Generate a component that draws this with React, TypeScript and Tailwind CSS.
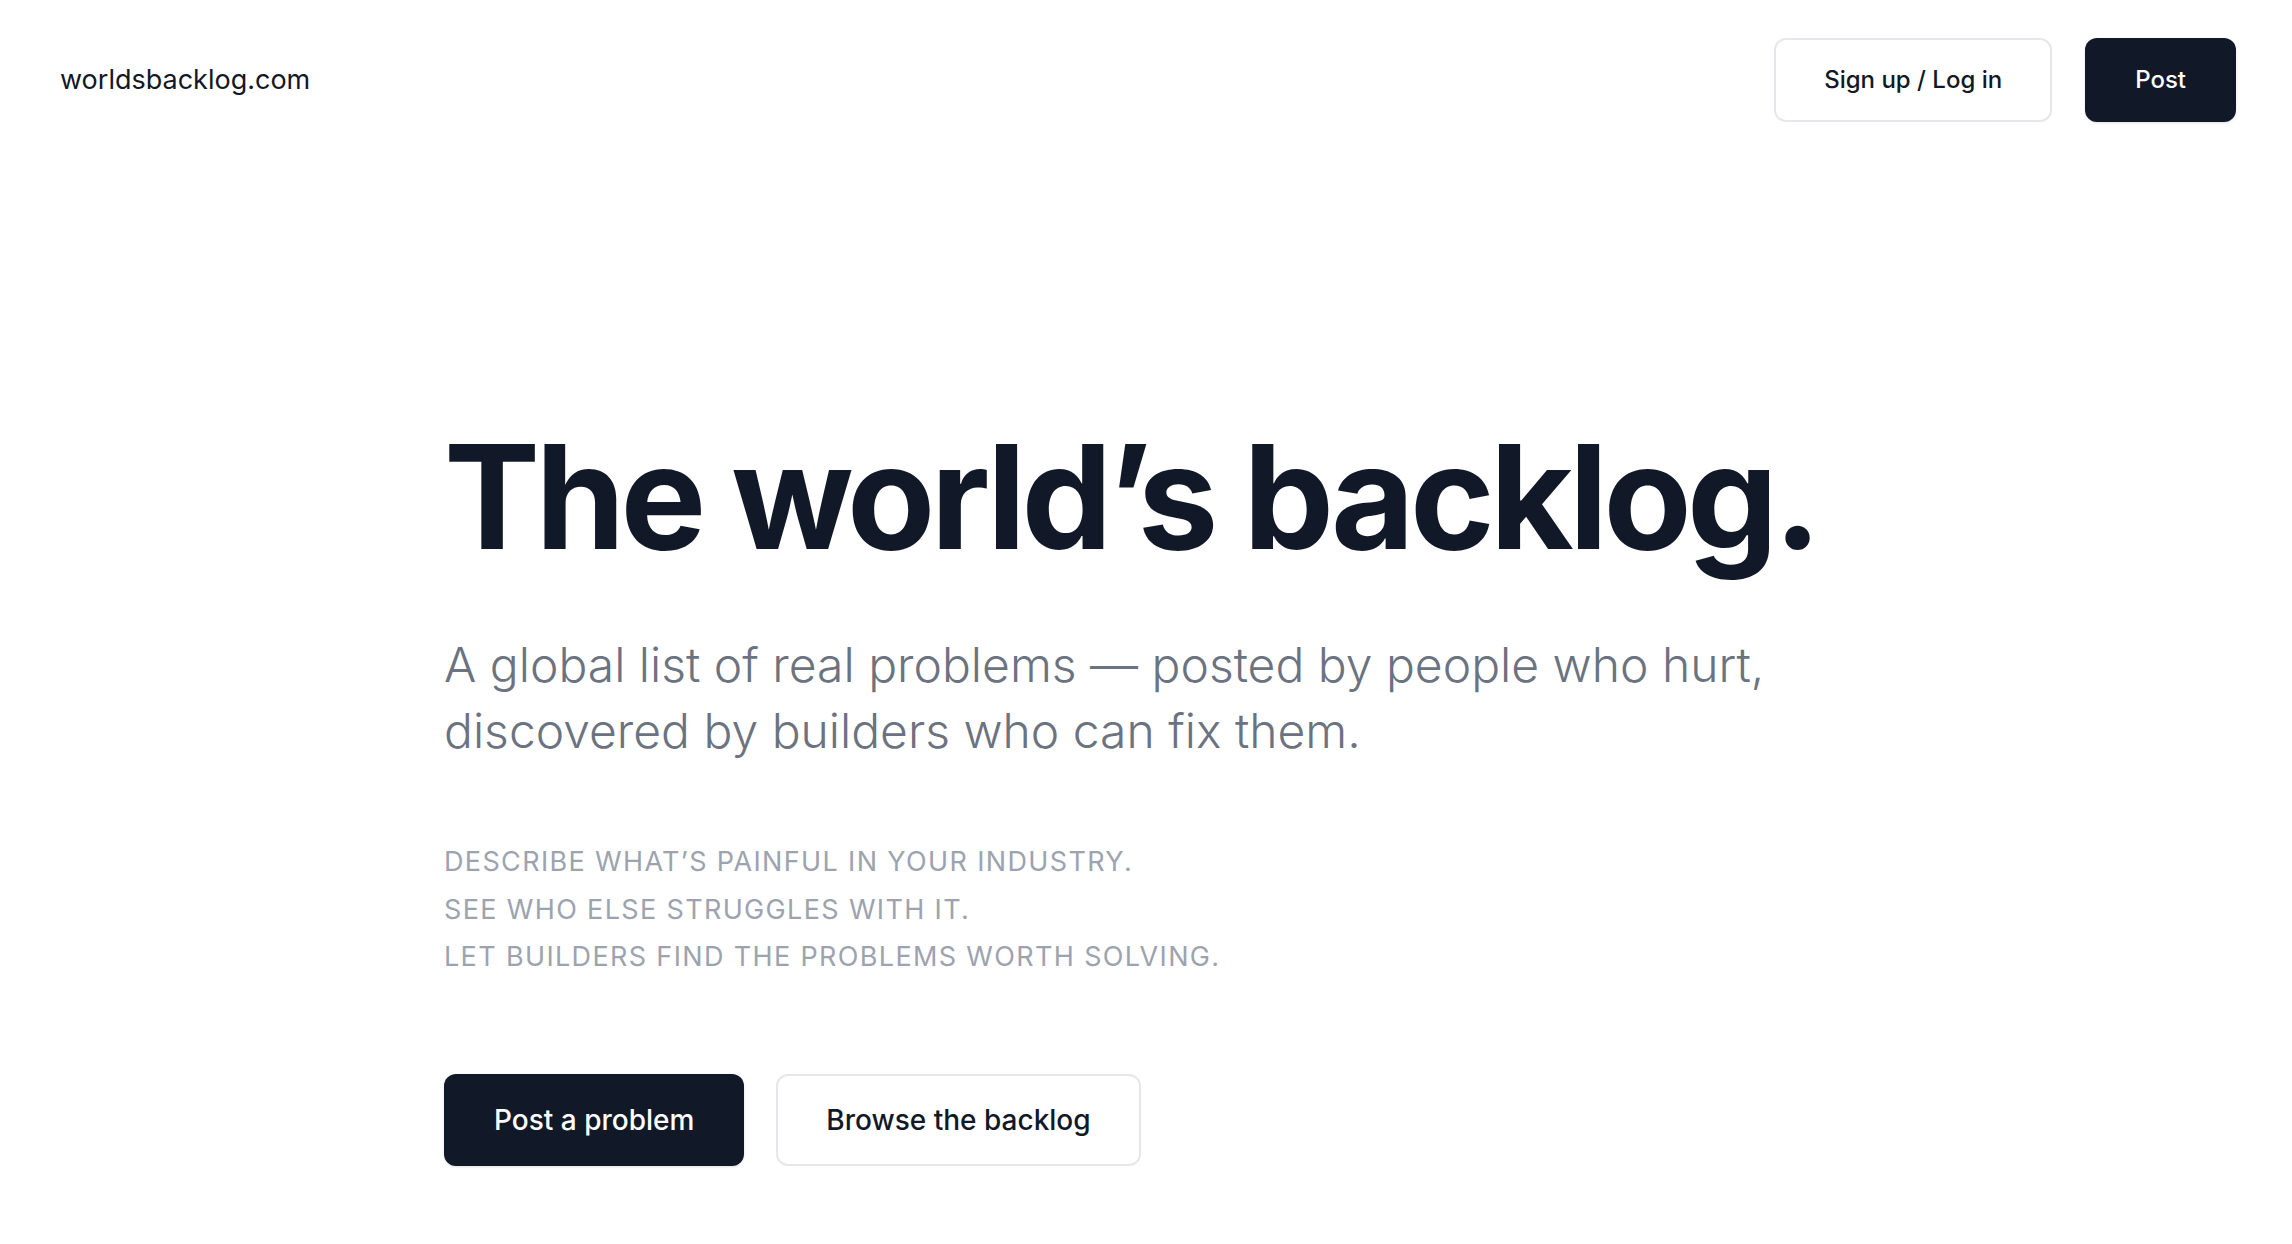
import React from 'react';

const taglines = [
  'Describe what’s painful in your industry.',
  'See who else struggles with it.',
  'Let builders find the problems worth solving.',
];

const App: React.FC = () => {
  return (
    <div className="min-h-screen bg-white font-['Inter','Noto_Sans',sans-serif] text-[#111827]">
      {/* Top bar */}
      <header className="flex items-center justify-between pl-[60px] pr-[56px] pt-[38px]">
        <a href="#" className="text-[27px] font-normal leading-[42px] text-[#111827]">
          worldsbacklog.com
        </a>
        <div className="flex items-center gap-[33px]">
          <button className="h-[84px] rounded-[12px] border-2 border-[#e5e7eb] bg-white px-[48px] text-[24px] font-medium text-[#111827]">
            Sign up / Log in
          </button>
          <button className="h-[84px] rounded-[12px] bg-[#111827] px-[50px] text-[24px] font-medium text-white shadow-sm">
            Post
          </button>
        </div>
      </header>

      {/* Hero */}
      <main className="mx-auto w-[1404px] pt-[303px]">
        <h1 className="text-[144px] font-bold leading-none tracking-[-0.032em] text-[#111827]">
          The world’s backlog.
        </h1>
        <p className="mt-[63px] text-[48px] font-light leading-[66px] text-[#6b7280]">
          A global list of real problems — posted by people who hurt,
          <br />
          discovered by builders who can fix them.
        </p>

        <div className="mt-[74px] flex flex-col">
          {taglines.map((line) => (
            <span
              key={line}
              className="text-[27px] uppercase leading-[47.5px] tracking-[0.05em] text-[#9ca3af]"
            >
              {line}
            </span>
          ))}
        </div>

        <div className="mt-[93px] flex items-center gap-[32px]">
          <button className="h-[92px] rounded-[12px] bg-[#111827] px-[50px] text-[28px] font-medium text-white shadow-sm">
            Post a problem
          </button>
          <button className="h-[92px] rounded-[12px] border-2 border-[#e5e7eb] bg-white px-[48px] text-[28px] font-medium text-[#111827]">
            Browse the backlog
          </button>
        </div>
      </main>
    </div>
  );
};

export default App;
